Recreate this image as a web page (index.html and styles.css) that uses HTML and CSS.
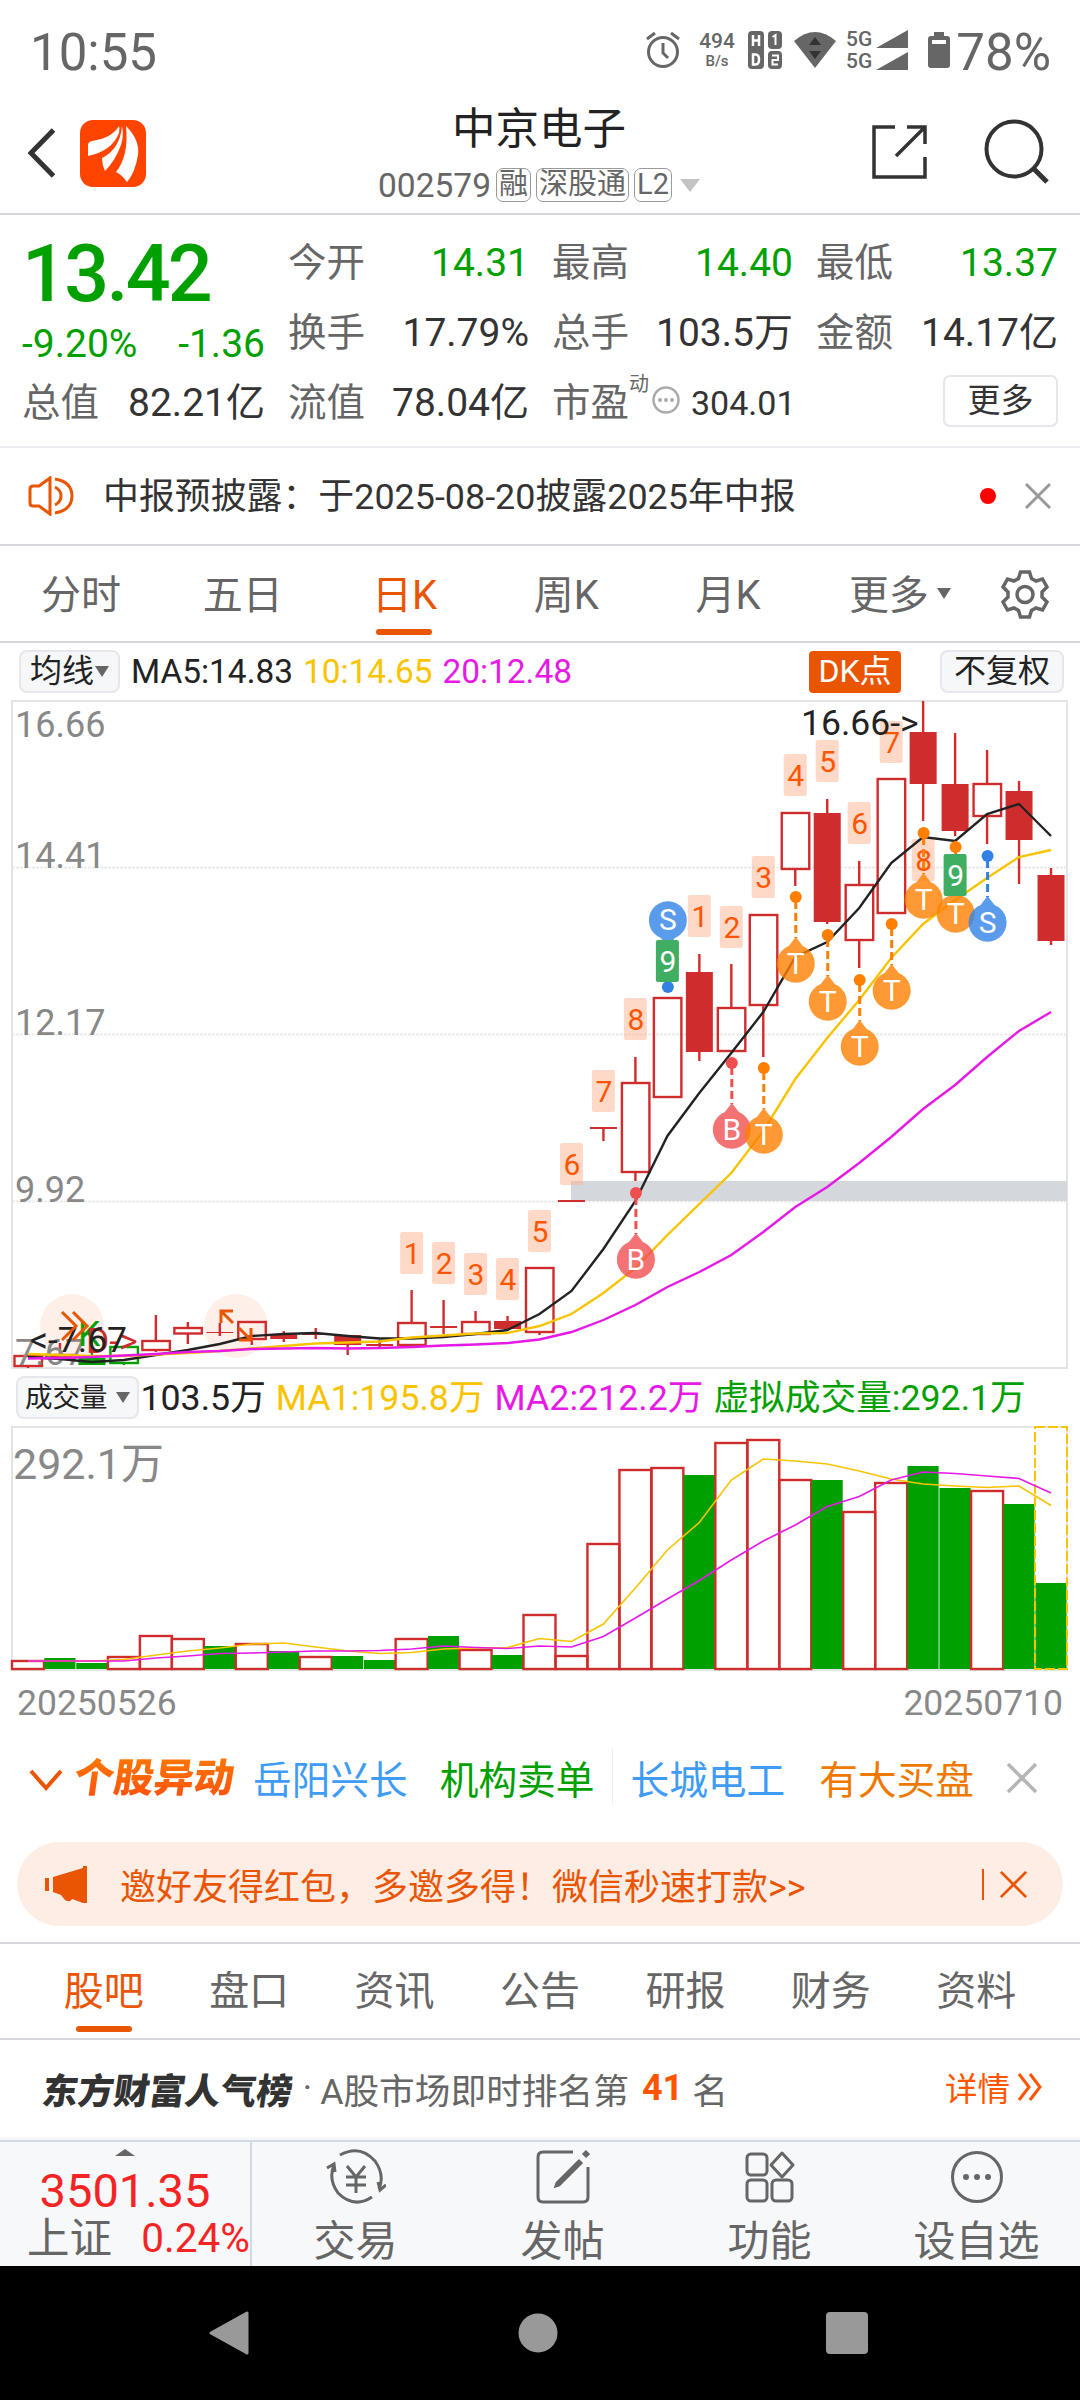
FILE: index.html
```html
<!DOCTYPE html>
<html lang="zh-CN">
<head>
    <meta charset="UTF-8">
    <title>中京电子 002579</title>
    <link rel="stylesheet" href="styles.css">
</head>
<body>
    <div class="status-bar">
        <span class="clock">10:55</span>
        <div class="status-icons">
            <svg class="alarm" width="36" height="40" viewBox="0 0 36 40">
                <circle cx="18" cy="22" r="14.5" fill="none" stroke="#666" stroke-width="3"/>
                <path d="M18 13v10l5 5M2 9l8-6M34 9l-8-6" fill="none" stroke="#666" stroke-width="3"/>
            </svg>
            <div class="net-speed"><b>494</b><small>B/s</small></div>
            <svg class="hd" width="34" height="38" viewBox="0 0 34 38">
                <rect x="0" y="0" width="16" height="38" rx="4" fill="#666"/>
                <path d="M5 4v11M11 4v11M5 9.500h6M5 23.500h2.500q3.500 0 3.500 5t-3.500 5H5z" fill="none" stroke="#fff" stroke-width="2.500"/>
                <rect x="20" y="0" width="14" height="18" rx="4" fill="#666"/>
                <rect x="20" y="20" width="14" height="18" rx="4" fill="#666"/>
                <path d="M24.500 6l3-2v10M24 24.500h6v4.500h-5.500v4.500H30" fill="none" stroke="#fff" stroke-width="2"/>
            </svg>
            <svg class="wifi" width="42" height="36" viewBox="0 0 42 36">
                <path d="M0 9Q21-9 42 9L21 36z" fill="#666"/>
                <path d="M15 13l6-8 6 8zM15 19h12l-6 8z" fill="#333"/>
            </svg>
            <div class="sim">
                <div><span>5G</span><svg width="32" height="18"><path d="M32 0v18H0z" fill="#666"/></svg></div>
                <div><span>5G</span><svg width="32" height="18"><path d="M32 0v18H0z" fill="#666"/></svg></div>
            </div>
            <svg class="battery" width="22" height="36" viewBox="0 0 22 36">
                <path d="M6 0h10v4h3q3 0 3 3v26q0 3-3 3H3q-3 0-3-3V7q0-3 3-3h3z" fill="#666"/>
                <rect x="4" y="8" width="14" height="4" fill="#fff"/>
            </svg>
            <span class="percent">78%</span>
        </div>
    </div>

    <header class="header">
        <div class="header-left">
            <svg width="28" height="50" viewBox="0 0 28 50"><path d="M25.500 2L3 25l22.500 23" fill="none" stroke="#333" stroke-width="5"/></svg>
            <svg class="logo" width="66" height="67" viewBox="0 0 66 67">
                <rect width="66" height="67" rx="13" fill="#ff4400"/>
                <path d="M8 36V25q0-3 4-4Q32 18 39 6q1 3 0 7Q32 31 8 36z" fill="#fff"/>
                <path d="M42 6q2 10-1 19Q35 41 25 51q-3-6-3-13Q40 29 42 6z" fill="#fff"/>
                <path d="M46 6q14 14 12 29-3 18-11 27-6-8-11-10Q49 36 46 6z" fill="#fff"/>
            </svg>
        </div>
        <div class="header-title">
            <h1>中京电子</h1>
            <div class="code">002579<i>融</i><i>深股通</i><i>L2</i><span class="caret"></span></div>
        </div>
        <div class="header-right">
            <svg width="56" height="56" viewBox="0 0 56 56"><path d="M23 3H2v50h51V33M35 3h18v17M53 3L24 32" fill="none" stroke="#333" stroke-width="3.500"/></svg>
            <svg width="66" height="66" viewBox="0 0 66 66"><circle cx="30" cy="30" r="27.500" fill="none" stroke="#333" stroke-width="4"/><path d="M50 50l13 13" stroke="#333" stroke-width="5"/></svg>
        </div>
    </header>

    <section class="quote">
        <div class="price-box">
            <div class="price">13.42</div>
            <div class="change"><span>-9.20%</span><span>-1.36</span></div>
        </div>
        <div class="item"><label>今开</label><span class="green">14.31</span></div>
        <div class="item"><label>最高</label><span class="green">14.40</span></div>
        <div class="item"><label>最低</label><span class="green">13.37</span></div>
        <div class="item"><label>换手</label><span>17.79%</span></div>
        <div class="item"><label>总手</label><span>103.5万</span></div>
        <div class="item"><label>金额</label><span>14.17亿</span></div>
        <div class="item"><label>总值</label><span>82.21亿</span></div>
        <div class="item"><label>流值</label><span>78.04亿</span></div>
        <div class="item pe">
            <label>市盈</label><sup>动</sup>
            <svg width="28" height="28" viewBox="0 0 28 28"><circle cx="14" cy="14" r="12.500" fill="none" stroke="#aaa" stroke-width="2.500"/><g fill="#aaa"><circle cx="8" cy="14" r="2"/><circle cx="14" cy="14" r="2"/><circle cx="20" cy="14" r="2"/></g></svg>
            <span>304.01</span>
        </div>
        <button class="more">更多</button>
    </section>

    <section class="notice">
        <svg width="46" height="40" viewBox="0 0 46 40" fill="none" stroke="#ea5504" stroke-width="3">
            <path d="M22 2L11 10H5q-3 0-3 3v14q0 3 3 3h6l11 8z"/>
            <path d="M27 11q6 3 6 9t-6 9M27 3q17 3 17 17T27 37"/>
        </svg>
        <p>中报预披露：于2025-08-20披露2025年中报</p>
        <span class="dot"></span>
        <svg class="close" width="28" height="28" viewBox="0 0 28 28"><path d="M2 2l24 24M26 2L2 26" stroke="#999" stroke-width="3"/></svg>
    </section>

    <nav class="period-tabs">
        <a>分时</a><a>五日</a><a class="active">日K</a><a>周K</a><a>月K</a><a>更多<span class="caret"></span></a>
        <svg width="48" height="50" viewBox="0 0 48 50" fill="none" stroke="#666" stroke-width="3.500">
            <path d="M19.500 3h9l2 6.500 4.500 2.500 6.500-2 4.500 8-5 5v5l5 5-4.500 8-6.500-2-4.500 2.500-2 6.500h-9l-2-6.500L13 39l-6.500 2L2 33l5-5v-5l-5-5 4.500-8 6.500 2 4.500-2.500z"/>
            <circle cx="24" cy="25.500" r="8"/>
        </svg>
    </nav>

    <div class="ma-row">
        <span class="select">均线<i class="caret"></i></span>
        <span class="ma5">MA5:14.83</span><span class="ma10">10:14.65</span><span class="ma20">20:12.48</span>
        <span class="dk">DK点</span>
        <span class="select adjust">不复权</span>
    </div>
    <svg id="kline" class="chart" width="1080" height="669" viewBox="0 700 1080 669"></svg>

    <div class="vol-row">
        <span class="select">成交量<i class="caret"></i></span>
        <span>103.5万</span><span class="ma10">MA1:195.8万</span><span class="ma20">MA2:212.2万</span><span class="green">虚拟成交量:292.1万</span>
    </div>
    <svg id="volume" class="chart" width="1080" height="246" viewBox="0 1426 1080 246"></svg>
    <div class="dates"><span>20250526</span><span>20250710</span></div>

    <section class="moves">
        <svg width="34" height="22" viewBox="0 0 34 22"><path d="M2 2l15 17L32 2" fill="none" stroke="#ea5504" stroke-width="4"/></svg>
        <strong>个股异动</strong>
        <span class="stock">岳阳兴长</span><span class="sell">机构卖单</span>
        <span class="stock second">长城电工</span><span class="buy">有大买盘</span>
        <svg class="close" width="32" height="32" viewBox="0 0 32 32"><path d="M2 2l28 28M30 2L2 30" stroke="#b5b5b5" stroke-width="3.500"/></svg>
    </section>

    <section class="promo">
        <svg width="42" height="37" viewBox="0 0 42 37" fill="#ea5504"><path d="M0 12h4v13H0zM8 11L38 2V0h4v37h-4l-11-4q-2 4-7 1l-4-5-8-3z"/></svg>
        <p>邀好友得红包，多邀多得！微信秒速打款&gt;&gt;</p>
        <svg class="close" width="31" height="31" viewBox="0 0 31 31"><path d="M2 2l27 27M29 2L2 29" stroke="#ea5504" stroke-width="3"/></svg>
    </section>

    <nav class="info-tabs">
        <a class="active">股吧</a><a>盘口</a><a>资讯</a><a>公告</a><a>研报</a><a>财务</a><a>资料</a>
    </nav>

    <section class="rank">
        <strong>东方财富人气榜</strong><span class="sep">·</span><span>A股市场即时排名第</span><b>41</b><span>名</span>
        <a>详情<svg width="26" height="30" viewBox="0 0 26 30"><path d="M2 2l10 13L2 28M13 2l10 13-10 13" fill="none" stroke="#ff5500" stroke-width="3"/></svg></a>
    </section>

    <footer class="toolbar">
        <div class="index">
            <i class="up"></i>
            <div class="index-value">3501.35</div>
            <div class="index-name"><span>上证</span><em>0.24%</em></div>
        </div>
        <div class="tool">
            <svg width="60" height="56" viewBox="0 0 60 56" fill="none" stroke="#666" stroke-width="3">
                <path d="M14 6q20-11 35 6 10 14 4 28M46 48q-18 12-34-4Q2 30 8 16M1 19l7-4 1 8M60 36l-6 5-2-8"/>
                <path d="M21 17l9 11 9-11M30 28v16M20 28h20M20 36h20"/>
            </svg>
            <span>交易</span>
        </div>
        <div class="tool">
            <svg width="54" height="56" viewBox="0 0 54 56" fill="none" stroke="#666" stroke-width="3">
                <path d="M37 3H7q-5 0-5 5v40q0 5 5 5h40q5 0 5-5V18"/>
                <path d="M43 12L21 34l-1 3 3-1 22-22z" fill="#666"/><path d="M48 7l4-4" stroke-width="6"/>
            </svg>
            <span>发帖</span>
        </div>
        <div class="tool">
            <svg width="52" height="56" viewBox="0 0 52 56" fill="none" stroke="#666" stroke-width="3">
                <rect x="3" y="5" width="20" height="21" rx="4"/><path d="M38 4l11 12-11 12-11-12z" stroke-linejoin="round"/>
                <rect x="3" y="31" width="20" height="21" rx="4"/><rect x="28" y="31" width="20" height="21" rx="4"/>
            </svg>
            <span>功能</span>
        </div>
        <div class="tool">
            <svg width="54" height="56" viewBox="0 0 54 56"><circle cx="27" cy="28" r="24.500" fill="none" stroke="#666" stroke-width="3"/><g fill="#666"><circle cx="16" cy="28" r="3"/><circle cx="27" cy="28" r="3"/><circle cx="38" cy="28" r="3"/></g></svg>
            <span>设自选</span>
        </div>
    </footer>

    <div class="system-nav">
        <svg width="40" height="44"><path d="M38 2v40L2 22z" fill="#999" stroke="#999" stroke-width="3" stroke-linejoin="round"/></svg>
        <svg width="40" height="40"><circle cx="20" cy="20" r="19.500" fill="#999"/></svg>
        <svg width="42" height="42"><rect width="42" height="42" rx="4" fill="#999"/></svg>
    </div>

    <script src="script.js"></script>
</body>
</html>
```
FILE: styles.css
```css
:root {
    --orange: #ea5504;
    --green: #00a000;
    --yellow: #f9c300;
    --magenta: #e619e6;
    --gray: #666;
    --line: #d6d6dc;
}

* {
    box-sizing: border-box;
}

body {
    margin: 0;
    width: 1080px;
    background: #fff;
    color: #333;
    font-family: Roboto, "Noto Sans CJK SC", sans-serif;
}

svg {
    display: block;
    flex: none;
}

h1, p {
    margin: 0;
    font-weight: normal;
}

i, em {
    font-style: normal;
}

.green {
    color: var(--green);
}

.caret {
    display: inline-block;
    border: 7px solid transparent;
    border-top: 11px solid var(--gray);
    border-bottom: 0;
}

/* status bar */
.status-bar {
    height: 104px;
    padding: 0 29px 0 30px;
    display: flex;
    justify-content: space-between;
    align-items: center;
    color: var(--gray);
    font-size: 51px;
}

.status-icons {
    display: flex;
    align-items: center;
    height: 100px;
}

.alarm {
    margin-top: -4px;
}

.net-speed {
    width: 36px;
    margin: -3px 13px 0 18px;
    text-align: center;
    line-height: 20px;
}

.net-speed b {
    display: block;
    font-size: 21px;
    font-weight: 500;
}

.net-speed small {
    display: block;
    font-size: 15px;
    font-weight: 500;
}

.hd,
.wifi,
.battery {
    position: relative;
    top: -2px;
}

.wifi {
    margin: 0 10px 0 12px;
}

.sim {
    margin-top: -5px;
}

.sim div {
    display: flex;
    align-items: center;
    gap: 4px;
    height: 22px;
    font-size: 21px;
    line-height: 22px;
    font-weight: 500;
}

.battery {
    margin: 0 6px 0 20px;
}

/* header */
.header {
    height: 111px;
    padding: 0 30px 0 28px;
    display: grid;
    grid-template-columns: 1fr 340px 1fr;
    border-bottom: 2px solid var(--line);
}

.header-left {
    display: flex;
    align-items: center;
    gap: 24px;
    padding-bottom: 12px;
}

.header-title {
    text-align: center;
}

.header-title h1 {
    font-size: 43.5px;
    line-height: 52px;
    color: #222;
}

.code {
    display: flex;
    align-items: center;
    justify-content: center;
    gap: 5px;
    height: 58px;
    font-size: 33.5px;
    color: var(--gray);
    white-space: nowrap;
}

.code i {
    height: 34px;
    padding: 0 2px;
    border: 1.5px solid #999;
    border-radius: 7px;
    font-size: 29px;
    line-height: 30px;
}

.code .caret {
    border-width: 13px 10px 0;
    border-top-color: #c4c4c4;
    margin-left: 3px;
}

.header-right {
    display: flex;
    justify-content: flex-end;
    align-items: center;
    gap: 56px;
    padding-bottom: 14px;
}

/* quote */
.quote {
    height: 233px;
    padding: 13px 22px 0;
    display: grid;
    grid-template-columns: 243px 241px 241px 1fr;
    grid-auto-rows: 70px;
    column-gap: 23px;
    border-bottom: 2px solid #ececf0;
}

.price-box {
    grid-row: span 2;
    color: var(--green);
}

.price {
    margin-left: 0;
    font-size: 79px;
    font-weight: 500;
    line-height: 93px;
    letter-spacing: -2.7px;
}

.change {
    display: flex;
    justify-content: space-between;
    font-size: 39px;
    line-height: 47px;
}

.item {
    display: flex;
    justify-content: space-between;
    line-height: 70px;
    font-size: 39px;
    white-space: nowrap;
}

.item label {
    font-size: 38.5px;
    color: var(--gray);
}

.pe {
    justify-content: flex-start;
    align-items: center;
}

.pe sup {
    font-size: 20px;
    line-height: 20px;
    margin-bottom: 38px;
    color: var(--gray);
}

.pe span {
    margin-left: 11px;
    font-size: 34px;
}

.pe svg {
    margin: -6px 0 0 3px;
}

.more {
    justify-self: end;
    width: 115px;
    height: 52px;
    margin-top: 7px;
    padding: 0;
    border: 2px solid #e6e6ec;
    border-radius: 7px;
    background: #fff;
    color: #333;
    font: 33px/46px Roboto, "Noto Sans CJK SC", sans-serif;
}

/* notice */
.notice {
    height: 98px;
    padding: 0 28px;
    display: flex;
    align-items: center;
    border-bottom: 2px solid var(--line);
}

.notice p {
    margin: 0 0 6px 29px;
    font-size: 35.9px;
}

.notice .dot {
    width: 16px;
    height: 16px;
    margin-left: auto;
    border-radius: 50%;
    background: #f00;
}

.notice .close {
    margin-left: 28px;
}

/* tabs */
.period-tabs,
.info-tabs {
    height: 97px;
    display: flex;
    align-items: center;
    border-bottom: 2px solid var(--line);
    font-size: 40px;
    color: var(--gray);
}

.period-tabs a,
.info-tabs a {
    position: relative;
    flex: 1;
    line-height: 97px;
    text-align: center;
    white-space: nowrap;
}

.period-tabs a {
    flex: 0 0 161.8px;
    line-height: 95px;
    padding-top: 3px;
}

.period-tabs a .caret {
    margin-left: 8px;
    vertical-align: 10px;
}

.period-tabs a:nth-child(6) {
    padding-left: 20px;
}

.period-tabs svg {
    margin: 0 31px 0 30px;
}

.active {
    color: var(--orange);
}

.active::after {
    content: "";
    position: absolute;
    left: 50%;
    bottom: 8px;
    width: 56px;
    height: 6px;
    margin-left: -28px;
    border-radius: 3px;
    background: var(--orange);
}

/* chart captions */
.ma-row,
.vol-row {
    height: 57px;
    display: flex;
    align-items: center;
    padding: 0 16px 0 19px;
    font-size: 33.4px;
    color: #222;
    white-space: nowrap;
}

.select {
    display: flex;
    align-items: center;
    height: 43px;
    padding: 0 9px;
    border: 2px solid #e6e6ec;
    border-radius: 8px;
    background: #f6f7f9;
    font-size: 32px;
    line-height: 39px;
}

.ma-row .select .caret {
    margin-left: 1px;
}

.ma-row .adjust {
    padding: 0 12px;
}

.ma10 {
    color: var(--yellow);
}

.ma20 {
    color: var(--magenta);
}

.ma5 {
    margin: 0 10px 0 11px;
}

.ma-row .ma20 {
    margin-left: 10px;
}

.dk {
    margin: 0 39px 0 auto;
    width: 92px;
    height: 42px;
    border-radius: 4px;
    background: var(--orange);
    color: #fff;
    font-size: 32px;
    line-height: 40px;
    text-align: center;
}

.vol-row {
    padding-left: 16px;
    font-size: 35.7px;
    gap: 10px;
}

.vol-row > span:not(.select) {
    line-height: 50px;
    margin-top: 1px;
}

.vol-row .select {
    padding: 0 7px;
    margin-right: -8px;
    font-size: 27.5px;
}

.vol-row .caret {
    margin-left: 8px;
}

.dates {
    height: 63px;
    padding: 0 17px;
    display: flex;
    justify-content: space-between;
    font-size: 35.5px;
    line-height: 63px;
    color: #888;
}

/* chart drawing */
.frame {
    fill: none;
    stroke: #e4e4e4;
    stroke-width: 2;
}

.grid {
    stroke: #ebebeb;
    stroke-width: 2;
    stroke-dasharray: 3 1;
}

.axis {
    fill: #888;
    font-size: 36px;
}

.axis.big {
    font-size: 43px;
}

.mark {
    fill: #222;
    font-size: 35.5px;
}

.ma-line {
    fill: none;
}

.digit {
    fill: #ff5500;
    font-size: 30px;
    text-anchor: middle;
}

.pin {
    fill: #fff;
    font-size: 30px;
    text-anchor: middle;
}

/* stock moves */
.moves {
    height: 90px;
    padding: 0 42px 0 29px;
    display: flex;
    align-items: center;
    font-size: 38.7px;
    white-space: nowrap;
}

.moves span {
    margin-bottom: 6px;
}

.moves strong {
    margin: 0 19px 2px 11px;
    font-size: 40px;
    font-weight: 900;
    line-height: 50px;
    transform: skewX(-8deg);
    background: linear-gradient(#ff7a00, #ff4d10);
    -webkit-background-clip: text;
    background-clip: text;
    color: transparent;
}

.stock {
    color: #3f9cf5;
}

.sell {
    margin-left: 32px;
    color: var(--green);
}

.second {
    margin-left: 17px;
    padding-left: 18px;
    border-left: 1px solid #eee;
}

.buy {
    margin-left: 34px;
    color: #ef7900;
}

.moves .close {
    margin: 0 0 4px auto;
}

/* promo */
.promo {
    height: 84px;
    margin: 17px 17px 16px;
    padding: 0 35px 0 28px;
    display: flex;
    align-items: center;
    border-radius: 42px;
    background: #fdede5;
    color: var(--orange);
    font-size: 36px;
}

.promo p {
    margin-left: 33px;
}

.promo .close {
    margin-left: auto;
    padding-left: 15px;
    width: 46px;
    border-left: 2px solid var(--orange);
}

.info-tabs {
    height: 98px;
    padding: 0 31px;
    border-top: 2px solid var(--line);
}

.info-tabs .active::after {
    bottom: 8px;
}

/* popularity rank */
.rank {
    height: 97px;
    padding: 0 37px 1px 43px;
    display: flex;
    align-items: center;
    font-size: 35.7px;
    color: var(--gray);
    white-space: nowrap;
}

.rank strong {
    font-size: 35.7px;
    font-weight: 900;
    color: #333;
    transform: skewX(-8deg);
}

.rank .sep {
    margin: 0 8px 0 10px;
}

.rank b {
    margin: 0 9px 0 13px;
    font-weight: 700;
    color: #ff5500;
    font-size: 36px;
}

.rank a {
    display: flex;
    align-items: center;
    gap: 7px;
    margin: 0 0 3px auto;
    color: #ff5500;
    font-size: 32.5px;
}

/* toolbar */
.toolbar {
    height: 129px;
    border-top: 3px solid #f6f7f9;
    display: flex;
    background: #f7f8fa;
    box-shadow: inset 0 2px 0 #d3d9e0;
}

.index {
    width: 252px;
    border-right: 2px solid #d3d9e0;
    color: #f52424;
    text-align: center;
}

.up {
    display: block;
    width: 0;
    margin: 9px auto 0;
    border: 10px solid transparent;
    border-top: 0;
    border-bottom: 7px solid var(--gray);
}

.index-value {
    font-size: 47px;
    line-height: 50px;
    margin-top: 10px;
}

.index-name {
    display: flex;
    justify-content: space-between;
    padding: 0 0 0 27px;
    line-height: 45px;
    font-size: 42.5px;
    color: var(--gray);
}

.index-name em {
    font-size: 40.5px;
    color: #f52424;
}

.tool {
    flex: 1;
    display: flex;
    flex-direction: column;
    align-items: center;
    padding-top: 9px;
    color: var(--gray);
    font-size: 42px;
    line-height: 74px;
}

/* android navigation */
.system-nav {
    height: 134px;
    padding: 0 212px 0 209px;
    display: flex;
    justify-content: space-between;
    align-items: center;
    background: #000;
}
```
FILE: script.js
```js
const RED = '#cf2d2d';
const GREEN = '#00a000';
const LEFT = 12;
const RIGHT = 1067;
const STEP = (RIGHT - LEFT) / 33;

// [kind, open/close top, bottom, high, low], h = hollow, s = solid
const candles = [
    ['h', 1356, 1366, 1356, 1368], ['h', 1355, 1357, 1343, 1358], ['gs', 1358, 1365, 1353, 1365],
    ['gh', 1347, 1363, 1347, 1365], ['h', 1341, 1350, 1315, 1352], ['h', 1328, 1333.5, 1322, 1344],
    ['s', 1332, 1333, 1323, 1336], ['h', 1322, 1339, 1322, 1345], ['s', 1334.5, 1339, 1331, 1342],
    ['s', 1333.5, 1335, 1328, 1339], ['s', 1335, 1345, 1335, 1355], ['s', 1344, 1346, 1340, 1347],
    ['h', 1323, 1345, 1290, 1345], ['s', 1326, 1328, 1300, 1334], ['h', 1322, 1334, 1311, 1334],
    ['s', 1321, 1329, 1316, 1329], ['h', 1268, 1332, 1268, 1335], ['s', 1200, 1202, 1200, 1202],
    ['s', 1127, 1129, 1127, 1141], ['h', 1083, 1172, 1057, 1181], ['h', 998, 1097, 998, 1097],
    ['s', 972, 1052, 954, 1061], ['h', 1008, 1051, 964, 1051], ['h', 915, 1005, 915, 1057],
    ['h', 813, 869, 813, 886], ['s', 813, 922, 799, 924], ['h', 885, 940, 861, 968],
    ['h', 779, 913, 779, 913], ['s', 732, 784, 701, 821], ['s', 784, 831, 733, 836],
    ['h', 784, 816, 750, 844], ['s', 791, 840, 781, 884], ['s', 875, 941, 868, 945]
];

const ma5 = [1357, 1359, 1362, 1360, 1355, 1350, 1344, 1336, 1334, 1333, 1336, 1338.5, 1338.5, 1337, 1334, 1330, 1314,
    1291, 1249, 1201, 1136, 1093, 1053, 1012, 957, 942, 908, 863, 837, 841, 814, 804, 836];
const ma10 = [1354, 1355, 1356, 1356, 1354.5, 1353, 1351, 1348.5, 1346, 1343.5, 1342.5, 1341.5, 1337.5, 1335.5, 1333.5, 1333, 1326,
    1314, 1293, 1268, 1235, 1204, 1173, 1131, 1079, 1038, 1000, 958, 924, 900, 878, 857, 850];
const ma20 = [1358.5, 1358, 1357, 1355.5, 1354, 1352, 1351, 1349, 1348.5, 1348, 1348.5, 1348, 1347, 1345.5, 1344.5, 1343, 1339.5,
    1332, 1320, 1305, 1287, 1272, 1255, 1232, 1207, 1187, 1163, 1137, 1109, 1085, 1057, 1031, 1012];

// [candle index, digit, top]
const digits = [
    [12, 1, 1232], [13, 2, 1242], [14, 3, 1253], [15, 4, 1258], [16, 5, 1210], [17, 6, 1143], [18, 7, 1070], [19, 8, 998],
    [21, 1, 895], [22, 2, 906], [23, 3, 856], [24, 4, 754], [25, 5, 740], [26, 6, 802], [27, 7, 721], [28, 8, 839]
];
const nines = [[20, 9, 940], [29, 9, 854]];

// [candle index, letter, dot y, direction]
const pins = [
    [19, 'B', 1193, 1], [20, 'S', 987, -1], [22, 'B', 1063, 1], [23, 'T', 1068, 1], [24, 'T', 897, 1], [25, 'T', 935, 1],
    [26, 'T', 980, 1], [27, 'T', 924, 1], [28, 'T', 833, 1], [29, 'T', 847, 1], [30, 'S', 856, 1]
];
const pinColors = { B: '#f04f50', S: '#3282e6', T: '#ff7f00' };

const volumes = [
    ['r', 1661], ['g', 1658], ['g', 1663], ['r', 1657], ['r', 1636], ['r', 1639], ['g', 1646], ['r', 1644], ['g', 1651],
    ['r', 1657], ['g', 1656], ['g', 1660], ['r', 1639], ['g', 1636], ['r', 1650], ['g', 1655], ['r', 1615], ['r', 1656],
    ['r', 1544], ['r', 1470], ['r', 1468], ['g', 1475], ['r', 1443], ['r', 1440], ['r', 1480], ['g', 1480], ['r', 1512],
    ['r', 1483], ['g', 1466], ['g', 1488], ['r', 1491], ['g', 1504], ['g', 1583]
];
const vma1 = [1661, 1661, 1661, 1659.5, 1655, 1651, 1648, 1644, 1643, 1647, 1651, 1653.5, 1652.5, 1649, 1648, 1647.5, 1638.5,
    1641.5, 1624, 1588, 1550, 1522.5, 1480, 1459, 1461, 1464, 1471, 1479, 1484, 1486, 1487.5, 1486, 1505.5];
const vma2 = [1661, 1661, 1661, 1661, 1658, 1656, 1653.5, 1653, 1652, 1651, 1651, 1650.5, 1649, 1646, 1647.5, 1648.5, 1646,
    1647, 1636.5, 1618, 1599, 1580.5, 1560, 1541, 1525, 1506.5, 1496.5, 1480, 1472, 1473.5, 1476, 1478.5, 1493];

const cx = i => LEFT + STEP * (i + 0.5);

function line(values, color, width) {
    const points = values.map((y, i) => `${cx(i).toFixed(1)},${y}`).join(' ');
    return `<polyline class="ma-line" points="${points}" stroke="${color}" stroke-width="${width}"/>`;
}

function candle([kind, top, bottom, high, low], i) {
    const x = cx(i);
    const color = kind[0] === 'g' ? GREEN : RED;
    const wick = `<path d="M${x} ${high}V${top}M${x} ${bottom}V${low}" stroke="${color}" stroke-width="2.4"/>`;
    if (kind.endsWith('h')) {
        return wick + `<rect x="${x - 13.5}" y="${top}" width="27.500" height="${bottom - top}" fill="none" stroke="${color}" stroke-width="2.400"/>`;
    }
    return wick + `<rect x="${x - 13.5}" y="${top}" width="27" height="${bottom - top}" fill="${color}"/>`;
}

function digit([i, n, y], bg, color) {
    return `<rect x="${cx(i) - 11.5}" y="${y}" width="23" height="42" rx="2" fill="${bg}"/>
        <text class="digit" x="${cx(i) + 0.5}" y="${y + 31.5}" style="fill:${color}">${n}</text>`;
}

function pin([i, letter, y, dir]) {
    const x = cx(i) + 0.5;
    const c = y + 67 * dir;
    const color = pinColors[letter];
    return `<circle cx="${x}" cy="${y}" r="6" fill="${color}"/>
        <path d="M${x} ${y + 4 * dir}V${y + 41 * dir}" stroke="${color}" stroke-width="3" stroke-dasharray="8 4"/>
        <path d="M${x} ${c - 27 * dir}L${x + 7} ${c - 18 * dir}A19 19 0 1 ${dir > 0 ? 1 : 0} ${x - 7} ${c - 18 * dir}z" fill="${color}" opacity="0.8"/>
        <text class="pin" x="${x}" y="${c + 10}">${letter}</text>`;
}

function drawKline() {
    const labels = [['16.66', 737], ['14.41', 868], ['12.17', 1035], ['9.92', 1202], ['7.67', 1365]];
    let out = `<rect class="frame" x="${LEFT}" y="701" width="1055" height="667"/>`;
    out += [867.5, 1034.5, 1201.5].map(y => `<path class="grid" d="M${LEFT} ${y}H${RIGHT}"/>`).join('');
    out += '<circle cx="72" cy="1326" r="32" fill="#fef0e9"/><circle cx="236" cy="1326" r="32" fill="#fef0e9"/>';
    out += '<rect x="571" y="1181" width="496" height="20" fill="#d4d7dc"/>';
    out += candles.map(candle).join('');
    out += labels.map(([t, y]) => `<text class="axis" x="15" y="${y}">${t}</text>`).join('');
    out += '<text class="mark" x="78" y="1346" style="fill:#00a000">K</text>';
    out += '<text class="mark" x="86" y="1353" style="fill:#cf2d2d">D-&gt;</text>';
    out += digits.map(d => digit(d, 'rgba(255,180,145,0.5)', '#ff5500')).join('');
    out += line(ma5, '#222', 2.4) + line(ma10, '#f9c300', 2.4) + line(ma20, '#e619e6', 2.4);
    out += pins.map(pin).join('');
    out += nines.map(d => digit(d, '#3fae62', '#fff')).join('');
    out += '<text class="mark" x="30" y="1352">&lt;-7.67</text><text class="mark" x="801" y="735">16.66-&gt;</text>';
    out += '<path d="M62 1312l14 14-14 14M73 1312l14 14-14 14M221 1323v-12h12M222 1312l11 11M251 1328v12h-12M250 1339l-11-11" fill="none" stroke="#ea5504" stroke-width="3"/>';
    document.getElementById('kline').innerHTML = out;
}

function drawVolume() {
    const base = 1669;
    let out = `<rect class="frame" x="${LEFT}" y="1427" width="1055" height="243"/>`;
    out += '<text class="axis big" x="13" y="1479">292.1万</text>';
    out += volumes.map(([kind, y], i) => {
        const x = LEFT + STEP * i;
        return kind === 'r'
            ? `<rect x="${x}" y="${y}" width="${STEP}" height="${base - y}" fill="none" stroke="${RED}" stroke-width="2.400"/>`
            : `<rect x="${x + 0.3}" y="${y}" width="${STEP - 0.8}" height="${base - y}" fill="${GREEN}"/>`;
    }).join('');
    out += `<rect x="${LEFT + STEP * 32}" y="1427" width="${STEP}" height="242" fill="none" stroke="#f9c300" stroke-width="2" stroke-dasharray="10 3"/>`;
    out += line(vma1, '#f9c300', 1.6) + line(vma2, '#e619e6', 1.6);
    document.getElementById('volume').innerHTML = out;
}

drawKline();
drawVolume();
```
